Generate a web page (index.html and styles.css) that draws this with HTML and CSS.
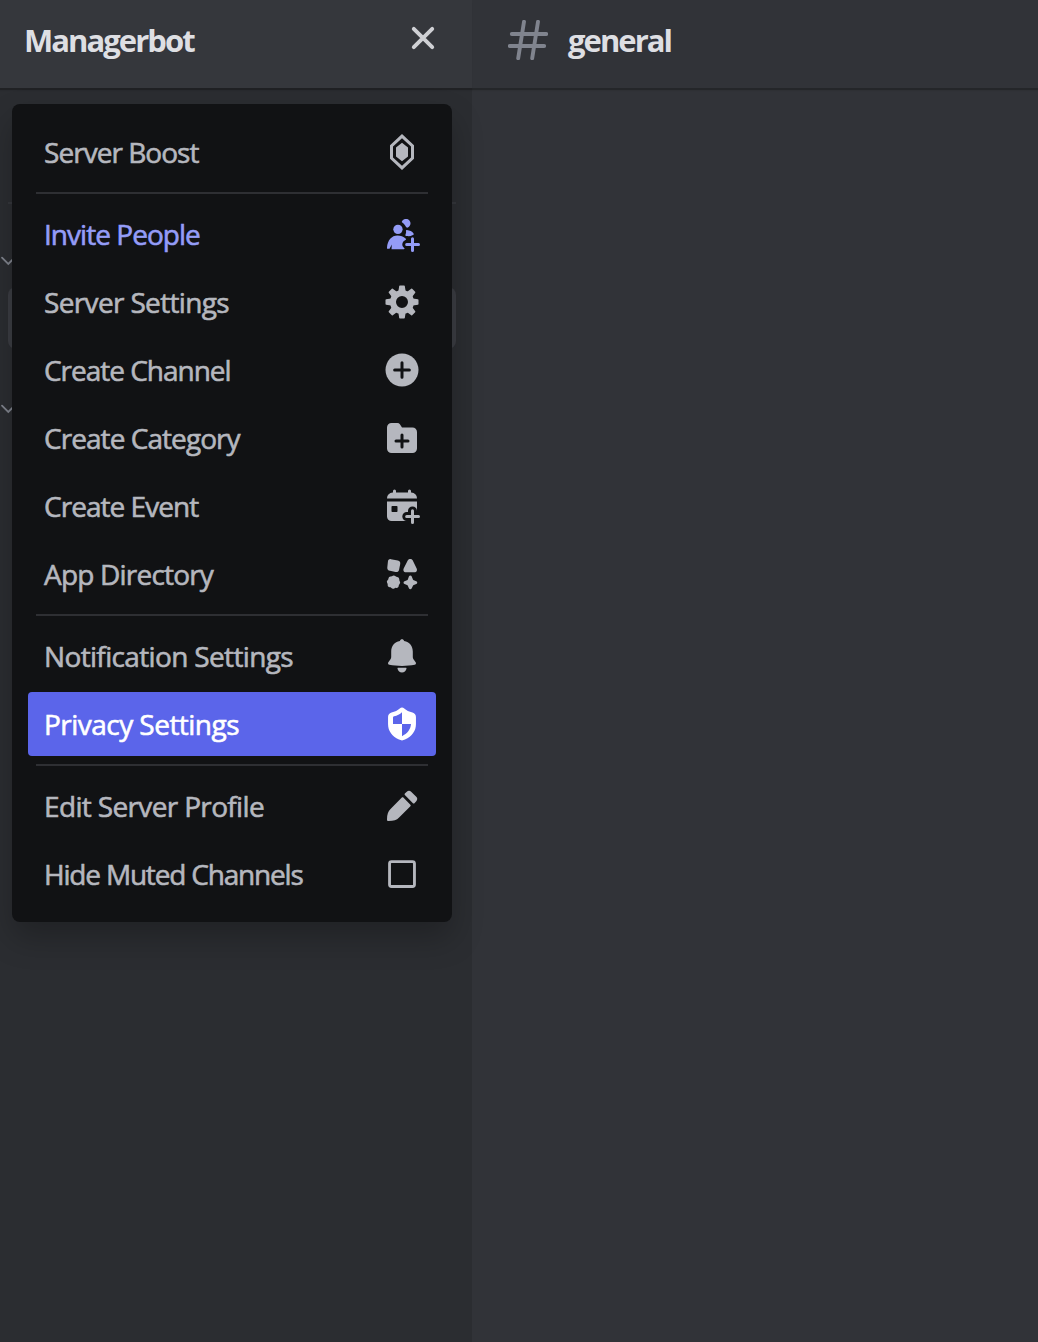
FILE: index.html
```html
<!DOCTYPE html>
<html lang="en">
<head>
<meta charset="utf-8">
<title>Managerbot</title>
<link rel="stylesheet" href="styles.css">
</head>
<body>
<div class="app">
  <aside class="sidebar">
    <header class="header server-header">
      <h1 class="title server-name">Managerbot</h1>
      <svg class="close" viewBox="0 0 24 24"><path d="M3.500 3.500l17 17M20.500 3.500l-17 17"/></svg>
    </header>
    <div class="channels">
      <div class="channel-divider"></div>
      <svg class="chevron" viewBox="0 0 16 10"><path d="M2 1.700L8.300 8l6.300-6.300"/></svg>
      <div class="channel-selected"></div>
      <svg class="chevron" viewBox="0 0 16 10"><path d="M2 1.700L8.300 8l6.300-6.300"/></svg>
    </div>
    <nav class="menu">
      <div class="item"><span class="label boost">Server Boost</span>
        <svg class="icon" viewBox="0 0 24 24"><path fill-rule="evenodd" d="M12 0l8 7.500v9L12 24l-8-7.500v-9zM12 2.800L6 8.400v7.200l6 5.600 6-5.600V8.400z"/><path d="M12 5.800l4 3.200v6l-4 3.200L8 15V9z"/></svg></div>
      <div class="separator"></div>
      <div class="item accent"><span class="label invite">Invite People</span>
        <svg class="icon" viewBox="0 0 24 24"><path d="M11.800 4A3 3 0 1 1 15.500 7.800C14.900 7.600 14.600 7.200 14.200 6.500 13.600 5.400 12.900 4.900 11.800 4z"/><circle cx="9.300" cy="8.900" r="3.100"/><path d="M15.300 9.400c1.900.2 3.500 1 4.400 2.200.3.500.1.900-.4 1.100-1.300.7-2.600.9-4 .7-1.100-.2-1.300-.6-.9-1.300.3-.6.400-1.200.3-1.800-.1-.6.100-.9.600-.9z"/><path fill-rule="evenodd" d="M9 13c2.100 0 4 .7 5.400 2 .5.500.3.900-.4 1.200a3 3 0 0 0-.6 5.200c.5.300.4.700-.2.700H5L5.200 19l-1.500 2.900H2.700c-.5 0-.8-.3-.7-.8C2.300 16.200 5.100 13 9 13z"/><path class="line" d="M19 15.100v7.900M15.100 19H23"/></svg></div>
      <div class="item"><span class="label settings">Server Settings</span>
        <svg class="icon" viewBox="0 0 24 24"><path class="ring" d="M12 6a6 6 0 1 1 0 12 6 6 0 1 1 0-12z"/><path class="tooth" d="M10.600 1.500h2.800l.5 3.300h-3.800zM10.100 19.200h3.800l-.5 3.300h-2.800z"/><path class="tooth" transform="rotate(45 12 12)" d="M10.600 1.500h2.800l.5 3.300h-3.800zM10.100 19.200h3.800l-.5 3.300h-2.800z"/><path class="tooth" transform="rotate(90 12 12)" d="M10.600 1.500h2.800l.5 3.300h-3.800zM10.100 19.200h3.800l-.5 3.300h-2.800z"/><path class="tooth" transform="rotate(135 12 12)" d="M10.600 1.500h2.800l.5 3.300h-3.800zM10.100 19.200h3.800l-.5 3.300h-2.800z"/></svg></div>
      <div class="item"><span class="label channel">Create Channel</span>
        <svg class="icon" viewBox="0 0 24 24"><circle cx="12" cy="12" r="11"/><path class="line cut" d="M12 7.100v9.800M7.100 12h9.800"/></svg></div>
      <div class="item"><span class="label category">Create Category</span>
        <svg class="icon" viewBox="0 0 24 24"><path d="M2 5a3 3 0 0 1 3-3h3.930a2 2 0 0 1 1.660.900L12 5h7a3 3 0 0 1 3 3v11a3 3 0 0 1-3 3H5a3 3 0 0 1-3-3V5z"/><path class="line cut" d="M12 10v8M8 14h8"/></svg></div>
      <div class="item"><span class="label event">Create Event</span>
        <svg class="icon" viewBox="0 0 24 24"><path d="M7 1a1 1 0 0 1 1 1v.75c0 .14.11.25.25.25h7.500c.14 0 .25-.11.25-.25V2a1 1 0 1 1 2 0v.75c0 .14.11.25.26.25A3.750 3.750 0 0 1 22 6.750c0 .14-.11.25-.25.25H2.250A.25.25 0 0 1 2 6.750 3.750 3.750 0 0 1 5.740 3 .25.25 0 0 0 6 2.750V2a1 1 0 0 1 1-1z"/><path fill-rule="evenodd" d="M2 9h20v13H5a3 3 0 0 1-3-3zM5.500 12a.5.5 0 0 0-.5.5v3c0 .3.200.5.500.5h3c.3 0 .5-.2.500-.5v-3c0-.3-.2-.5-.5-.5z"/><path class="line cut wide" d="M19 15.300V23M15.200 19H23"/><path class="line" d="M19 15.100v7.900M15.100 19H23"/></svg></div>
      <div class="item"><span class="label apps">App Directory</span>
        <svg class="icon" viewBox="0 0 24 24"><path d="M4.600 2.100l4.600.9c1.300.3 1.900 1.100 1.600 2.300l-.7 3.700c-.3 1.300-1.100 1.900-2.400 1.700l-3.700-.8c-1.300-.3-1.900-1-1.800-2.300l.4-3.700c.1-1.300.8-2 2-1.800z"/><path d="M15.900 2.800c.7-1.100 2.500-1.100 3.200 0l2.600 5.300c.7 1.300 0 2.800-1.400 2.800h-5.600c-1.500 0-2.200-1.500-1.500-2.800z"/><path d="M5.300 13.500q1.200-.9 2.400 0l.5.400.7.100q1.300.2 1.300 1.500v.7l.3.600q.7 1.100-.2 2.100l-.4.500-.1.700q-.3 1.300-1.600 1.200l-.7-.1-.6.400q-1.100.7-2-.2l-.5-.5-.7-.1q-1.400-.2-1.300-1.500l.1-.7-.4-.6q-.6-1.200.4-2l.4-.5.1-.7q.200-1.200 1.500-1.100z"/><path d="M16.600 13.700c.4-.9 1.500-.9 1.900 0l.8 1.900c.1.300.3.500.6.600l1.600.6c.9.400.9 1.500 0 1.900l-1.600.6c-.3.100-.5.300-.6.600l-.8 1.600c-.4.900-1.500.9-1.900 0l-.7-1.600c-.1-.3-.3-.5-.6-.6l-1.600-.6c-.9-.4-.9-1.500 0-1.900l1.600-.6c.3-.1.5-.3.600-.6z"/></svg></div>
      <div class="separator"></div>
      <div class="item"><span class="label notify">Notification Settings</span>
        <svg class="icon" viewBox="0 0 24 24"><path d="M12 .9c.7 0 1.200.4 1.400 1.100C17 2.700 19.200 5.400 19.200 9v3.300c0 .9.200 1.500.7 2.200l1.200 1.700c.5.800.2 1.500-.7 1.700C18 18.400 15 18.600 12 18.600s-6-.2-8.400-.7c-.9-.2-1.200-.9-.7-1.700l1.200-1.700c.5-.7.700-1.300.7-2.200V9c0-3.600 2.200-6.300 5.800-7C10.800 1.300 11.300.9 12 .9z"/><path d="M9.500 19.800c1.700.1 3.300.1 5 0 .4 0 .6.300.5.700-.4 1.500-1.500 2.500-3 2.500s-2.600-1-3-2.500c-.1-.4.100-.7.500-.7z"/></svg></div>
      <div class="item active"><span class="label privacy">Privacy Settings</span>
        <svg class="icon" viewBox="0 0 24 24"><path fill-rule="evenodd" d="M10.500 1.600c.9-.8 2.100-.8 3 0 1.400 1.300 3.200 2.100 5.500 2.800 1.500.5 2.300 1.400 2.300 3V12c0 4.700-2.500 8-7.300 10.400-1.400.7-2.600.7-4 0C5.200 20 2.700 16.700 2.700 12V7.400c0-1.600.8-2.500 2.300-3 2.300-.7 4.100-1.500 5.500-2.800zM12 4.100C10.500 5.500 8.800 6.300 6.700 6.900c-.5.200-.7.500-.7 1V12h6zM12 12v8.100c3.500-1.700 5.700-4.400 6-8.100z"/></svg></div>
      <div class="separator"></div>
      <div class="item"><span class="label profile">Edit Server Profile</span>
        <svg class="icon" viewBox="0 0 24 24"><path d="M13.900 4.700c-.3-.3-.3-.7 0-1l1.300-1.200c.9-.9 2-.9 2.900 0l3.400 3.400c.9.900.9 2 0 2.900l-1.200 1.300c-.3.300-.7.300-1 0zM11.900 6.400c.3-.3.700-.3 1 0l4.700 4.700c.3.300.3.700 0 1l-7.700 7.700C8.500 21.200 6.500 22 3 22c-.7 0-1-.3-1-1 0-3.500.8-5.500 2.200-6.900z"/></svg></div>
      <div class="item"><span class="label muted">Hide Muted Channels</span>
        <svg class="icon" viewBox="0 0 24 24"><rect class="box" x="3.700" y="3.700" width="16.600" height="16.600" rx="1.300"/></svg></div>
    </nav>
  </aside>
  <main class="main">
    <header class="header">
      <svg class="hash" viewBox="0 0 40 40"><path d="M16 1.800L10.200 38.200M30 1.800L24.200 38.200M3.800 14h34.400M1.800 26h34.400"/></svg>
      <h2 class="title channel-name">general</h2>
    </header>
  </main>
</div>
</body>
</html>
```

FILE: styles.css
```css
* { box-sizing: border-box; }
body {
  margin: 0;
  background: #313338;
  font-family: "Open Sans", "Noto Sans", sans-serif;
}
.app { display: flex; height: 1342px; overflow: hidden; }
.sidebar { position: relative; width: 472px; background: #2b2d31; }
.main { flex: 1; background: #313338; }
.header {
  display: flex;
  align-items: center;
  height: 88px;
  box-shadow: 0 2px 0 rgba(4, 4, 5, .22), 0 3px 1px rgba(4, 4, 5, .06);
}
.server-header { justify-content: space-between; padding: 0 36px 0 24px; background: #35373c; }
.title { margin: 0; font-size: 31px; line-height: 40px; font-weight: 700; color: #dedfe3; padding-bottom: 8px; white-space: nowrap; }
.server-name { letter-spacing: -1.950px; }
.channel-name { letter-spacing: -1.950px; }
.close { width: 26px; height: 26px; margin-bottom: 12px; fill: none; stroke: #cfd0d4; stroke-width: 3.600; stroke-linecap: round; }
.main .header { padding-left: 36px; gap: 20px; }
.hash { width: 40px; height: 40px; margin-bottom: 8px; fill: none; stroke: #80848e; stroke-width: 3.900; stroke-linecap: round; }

.channels { display: flex; flex-direction: column; padding-top: 114px; }
.channel-divider { height: 2px; margin: 0 16px 0 8px; background: #35373c; }
.chevron { width: 16px; height: 10px; margin-top: 52px; fill: none; stroke: #80848e; stroke-width: 1.800; stroke-linecap: round; }
.channel-selected { height: 62px; margin: 21px 16px 3px 8px; border-radius: 8px; background: #3b3d43; }

.menu {
  position: absolute;
  top: 104px;
  left: 12px;
  display: flex;
  flex-direction: column;
  gap: 4px;
  width: 440px;
  padding: 16px;
  border-radius: 8px;
  background: #111214;
  box-shadow: 0 16px 32px rgba(0, 0, 0, .24);
  z-index: 1;
}
.separator { height: 2px; margin: 4px 8px; background: #2e2f33; }
.item {
  display: flex;
  align-items: center;
  justify-content: space-between;
  height: 64px;
  padding: 0 16px;
  border-radius: 4px;
  color: #b5b7be;
}
.accent { color: #949cf7; }
.active { background: #5b65ea; color: #fff; }
.label {
  font-size: 28px;
  line-height: 36px;
  font-weight: 500;
  letter-spacing: -.8px;
  white-space: nowrap;
  -webkit-text-stroke: .6px currentColor;
}
.boost, .invite, .event { letter-spacing: -.960px; }
.channel { letter-spacing: -1.020px; }
.category { letter-spacing: -.940px; }
.settings, .notify, .profile { letter-spacing: -.650px; }
.privacy { letter-spacing: -.530px; }
.muted { letter-spacing: -1.190px; }

.icon { flex: none; width: 36px; height: 36px; fill: currentColor; }
.line { fill: none; stroke: currentColor; stroke-width: 2; stroke-linecap: round; }
.cut { stroke: #111214; }
.wide { stroke-width: 6; }
.ring { fill: none; stroke: currentColor; stroke-width: 4; }
.tooth { stroke: currentColor; stroke-width: 1; stroke-linejoin: round; }
.box { fill: none; stroke: currentColor; stroke-width: 1.900; }
```
